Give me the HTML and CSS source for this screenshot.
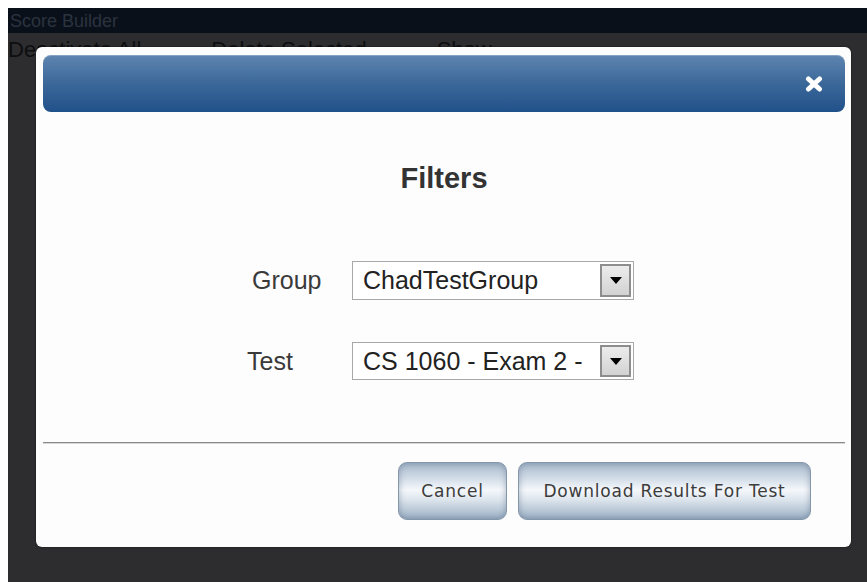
FILE: index.html
```html
<!DOCTYPE html>
<html lang="en">
<head>
<meta charset="utf-8">
<title>Filters</title>
<link rel="stylesheet" href="styles.css">
</head>
<body>
  <div class="page">
    <header class="topbar"><span class="brand">Score Builder</span></header>
    <nav class="toolbar">
      <span>Deactivate All</span>
      <span>Delete Selected</span>
      <span>Show</span>
    </nav>
  </div>

  <div class="dialog" role="dialog" aria-labelledby="dlg-title">
    <div class="dialog-head">
      <button class="close" aria-label="Close">
        <svg width="18" height="16" viewBox="0 0 18 16">
          <path d="M3.5 3 L14.5 13 M14.5 3 L3.5 13" stroke="#fff" stroke-width="5" stroke-linecap="round"/>
        </svg>
      </button>
    </div>

    <h2 class="dialog-title" id="dlg-title">Filters</h2>

    <div class="fields">
      <label class="field-label field-label--indent">Group</label>
      <div class="select">
        <span class="select-value">ChadTestGroup</span>
        <span class="select-btn"><svg width="12" height="7" viewBox="0 0 12 7"><path d="M0 0 H12 L6 7 Z" fill="#000"/></svg></span>
      </div>

      <label class="field-label">Test</label>
      <div class="select select--short">
        <span class="select-value">CS 1060 - Exam 2 -</span>
        <span class="select-btn"><svg width="12" height="7" viewBox="0 0 12 7"><path d="M0 0 H12 L6 7 Z" fill="#000"/></svg></span>
      </div>
    </div>

    <hr class="divider">

    <div class="actions">
      <button class="btn btn--cancel">Cancel</button>
      <button class="btn btn--download">Download Results For Test</button>
    </div>
  </div>
</body>
</html>
```

FILE: styles.css
```css
html {
  background: #fff;
}

body {
  margin: 0;
  padding: 8px 0 0 8px;
  height: 582px;
  box-sizing: border-box;
  overflow: hidden;
  font-family: "Liberation Sans", Arial, sans-serif;
}

/* page behind the dialog, dimmed */
.page {
  background: #2d2d2f;
  height: 574px;
}

.topbar {
  height: 25px;
  background: #0a1019;
  display: flex;
  align-items: center;
}

.brand {
  font-size: 18px;
  line-height: 22px;
  color: #2b3340;
  padding-left: 2px;
}

.toolbar {
  display: flex;
  gap: 70px;
  padding-top: 4px;
  font-size: 22px;
  color: #0e0e10;
}

/* dialog */
.dialog {
  position: absolute;
  left: 36px;
  top: 47px;
  width: 815px;
  height: 500px;
  box-sizing: border-box;
  padding: 8px 6px 0 7px;
  background: #fdfdfd;
  border-radius: 6px;
  box-shadow: 0 0 2px rgba(0, 0, 0, 0.6);
  display: flex;
  flex-direction: column;
}

.dialog-head {
  height: 57px;
  border-radius: 8px;
  background: linear-gradient(#5f85b0 0%, #3b6899 50%, #21518a 100%);
  box-shadow: inset 0 1px 0 rgba(255, 255, 255, 0.25);
  display: flex;
  justify-content: flex-end;
  align-items: center;
  padding-right: 22px;
}

.close {
  border: 0;
  padding: 0;
  background: none;
  width: 18px;
  height: 16px;
  display: block;
  cursor: pointer;
}

.close svg {
  display: block;
}

.dialog-title {
  margin: 50px 0 0;
  text-align: center;
  font-size: 29px;
  line-height: 33px;
  font-weight: bold;
  color: #333;
}

.fields {
  display: grid;
  grid-template-columns: 105px 282px;
  row-gap: 42px;
  margin: 66px 0 0 204px;
}

.field-label {
  align-self: center;
  font-size: 25px;
  color: #3a3a3a;
}

.field-label--indent {
  padding-left: 5px;
}

.select {
  height: 39px;
  box-sizing: border-box;
  border: 1px solid #a8a8a8;
  background: #fff;
  display: flex;
  align-items: stretch;
  padding: 2px;
}

.select--short {
  height: 38px;
}

.select-value {
  flex: 1;
  min-width: 0;
  padding-left: 8px;
  font-size: 25px;
  line-height: 33px;
  color: #222;
  white-space: nowrap;
  overflow: hidden;
}

.select-btn {
  width: 31px;
  box-sizing: border-box;
  border: 2px solid #8d8d8d;
  background: linear-gradient(#ececec, #d2d2d2);
  display: flex;
  align-items: center;
  justify-content: center;
}

.divider {
  margin: 62px 0 0;
  height: 0;
  border: 0;
  border-top: 1px solid #8a8a8a;
  border-bottom: 1px solid #d6d6d6;
}

.actions {
  display: flex;
  justify-content: flex-end;
  gap: 11px;
  margin-top: 18px;
  padding-right: 34px;
}

.btn {
  height: 58px;
  border: 1px solid #8497aa;
  border-radius: 9px;
  background: linear-gradient(#a7b8ca 0%, #d3dde8 28%, #f5f8fb 48%, #dce4ec 66%, #9cb0c5 100%);
  box-shadow: inset 0 0 6px rgba(70, 95, 125, 0.45);
  font-family: "DejaVu Sans", Verdana, sans-serif;
  font-size: 17px;
  letter-spacing: 0.8px;
  color: #3c3c3c;
  cursor: pointer;
}

.btn--cancel {
  width: 109px;
}

.btn--download {
  width: 293px;
}
```
